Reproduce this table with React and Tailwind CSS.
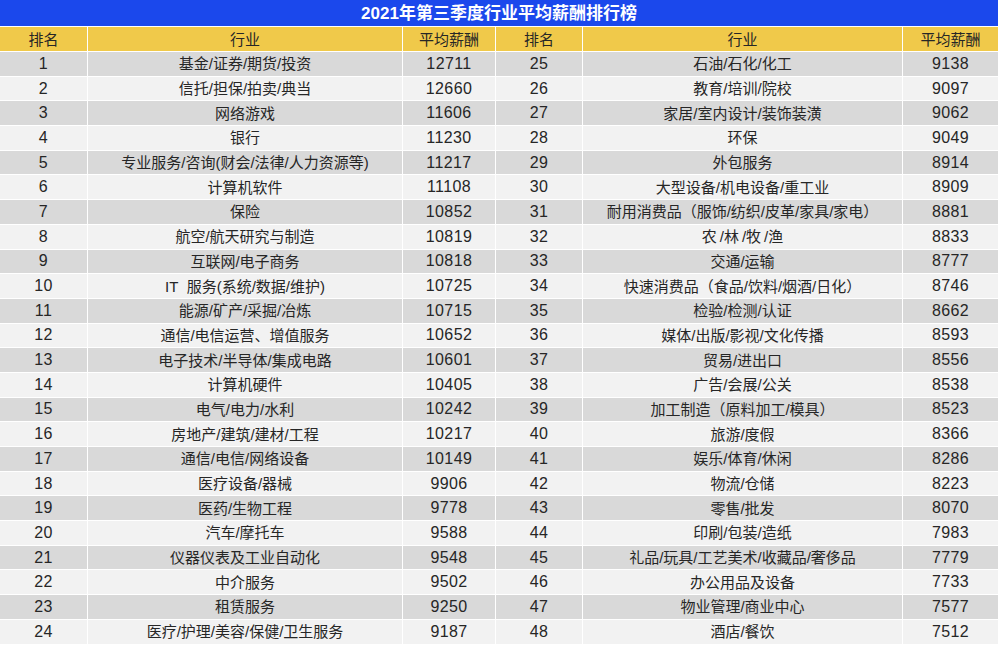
import React from 'react';

// ─────────────────────────────────────────────
// Data — 2021 Q3 average pay by industry
// ─────────────────────────────────────────────
const left = [
  [1, '基金/证券/期货/投资', 12711],
  [2, '信托/担保/拍卖/典当', 12660],
  [3, '网络游戏', 11606],
  [4, '银行', 11230],
  [5, '专业服务/咨询(财会/法律/人力资源等)', 11217],
  [6, '计算机软件', 11108],
  [7, '保险', 10852],
  [8, '航空/航天研究与制造', 10819],
  [9, '互联网/电子商务', 10818],
  [10, 'IT\u00a0 服务(系统/数据/维护)', 10725],
  [11, '能源/矿产/采掘/冶炼', 10715],
  [12, '通信/电信运营、增值服务', 10652],
  [13, '电子技术/半导体/集成电路', 10601],
  [14, '计算机硬件', 10405],
  [15, '电气/电力/水利', 10242],
  [16, '房地产/建筑/建材/工程', 10217],
  [17, '通信/电信/网络设备', 10149],
  [18, '医疗设备/器械', 9906],
  [19, '医药/生物工程', 9778],
  [20, '汽车/摩托车', 9588],
  [21, '仪器仪表及工业自动化', 9548],
  [22, '中介服务', 9502],
  [23, '租赁服务', 9250],
  [24, '医疗/护理/美容/保健/卫生服务', 9187],
];

const right = [
  [25, '石油/石化/化工', 9138],
  [26, '教育/培训/院校', 9097],
  [27, '家居/室内设计/装饰装潢', 9062],
  [28, '环保', 9049],
  [29, '外包服务', 8914],
  [30, '大型设备/机电设备/重工业', 8909],
  [31, '耐用消费品（服饰/纺织/皮革/家具/家电）', 8881],
  [32, '农\u2009/林\u2009/牧\u2009/渔', 8833],
  [33, '交通/运输', 8777],
  [34, '快速消费品（食品/饮料/烟酒/日化）', 8746],
  [35, '检验/检测/认证', 8662],
  [36, '媒体/出版/影视/文化传播', 8593],
  [37, '贸易/进出口', 8556],
  [38, '广告/会展/公关', 8538],
  [39, '加工制造（原料加工/模具）', 8523],
  [40, '旅游/度假', 8366],
  [41, '娱乐/体育/休闲', 8286],
  [42, '物流/仓储', 8223],
  [43, '零售/批发', 8070],
  [44, '印刷/包装/造纸', 7983],
  [45, '礼品/玩具/工艺美术/收藏品/奢侈品', 7779],
  [46, '办公用品及设备', 7733],
  [47, '物业管理/商业中心', 7577],
  [48, '酒店/餐饮', 7512],
];

const font = { fontFamily: '"Liberation Sans", "Noto Sans CJK SC", sans-serif' };

// one table cell; numbers get a touch larger size like the source sheet
const Cell = ({ children, bg, num }) => (
  <div
    className={`flex items-center justify-center leading-none text-[#262626] whitespace-nowrap
                ${num ? 'text-[16px] tracking-[0.4px]' : 'text-[15px]'} ${bg}`}
  >
    {children}
  </div>
);

export default function App() {
  const headers = ['排名', '行业', '平均薪酬', '排名', '行业', '平均薪酬'];

  return (
    <div className="w-[1000px] h-[653px] bg-white" style={font}>
      <div className="w-[998px]">
        {/* ── TITLE BAR ── */}
        <div className="h-[26px] bg-[#1b48ec] flex items-center justify-center
                        text-white font-bold text-[17px] leading-none">
          2021年第三季度行业平均薪酬排行榜
        </div>

        {/* ── TABLE ── */}
        <div
          className="grid grid-cols-[87px_314px_92px_86px_319px_95px]
                     grid-rows-[24px_repeat(24,23.7px)] gap-px pt-px bg-white"
        >
          {headers.map((h, i) => (
            <Cell key={`h${i}`} bg="bg-[#f0c94a]">{h}</Cell>
          ))}
          {left.map((row, i) => {
            const bg = i % 2 === 0 ? 'bg-[#d9d9d9]' : 'bg-[#f2f2f2]';
            const r = right[i];
            return (
              <React.Fragment key={row[0]}>
                <Cell bg={bg} num>{row[0]}</Cell>
                <Cell bg={bg}>{row[1]}</Cell>
                <Cell bg={bg} num>{row[2]}</Cell>
                <Cell bg={bg} num>{r[0]}</Cell>
                <Cell bg={bg}>{r[1]}</Cell>
                <Cell bg={bg} num>{r[2]}</Cell>
              </React.Fragment>
            );
          })}
        </div>
      </div>
    </div>
  );
}
